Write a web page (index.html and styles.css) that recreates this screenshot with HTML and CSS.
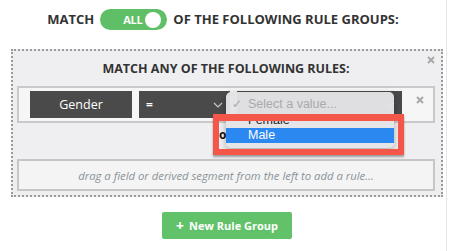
FILE: index.html
```html
<!DOCTYPE html>
<html>
<head>
<meta charset="utf-8">
<link rel="stylesheet" href="styles.css">
</head>
<body>
<div class="page">
  <div class="header">
    <span class="htext">MATCH</span>
    <span class="toggle"><span class="toggle-label">ALL</span><span class="knob"></span></span>
    <span class="htext">OF THE FOLLOWING RULE GROUPS:</span>
  </div>

  <div class="group">
    <svg class="close close-group" width="8" height="8" viewBox="0 0 8 8"><path d="M1 1L7 7M7 1L1 7" stroke="#a9a9a9" stroke-width="2"/></svg>
    <div class="group-title">MATCH ANY OF THE FOLLOWING RULES:</div>

    <div class="rule">
      <div class="field">Gender</div>
      <div class="select op">
        <span class="op-val">=</span>
        <svg class="chev" width="10" height="6" viewBox="0 0 10 6"><path d="M1 1L5 5L9 1" fill="none" stroke="#c9c9c9" stroke-width="1.2"/></svg>
      </div>
      <div class="select value">
        <svg class="chev" width="10" height="6" viewBox="0 0 10 6"><path d="M1 1L5 5L9 1" fill="none" stroke="#c9c9c9" stroke-width="1.2"/></svg>
      </div>
      <svg class="close close-rule" width="8" height="8" viewBox="0 0 8 8"><path d="M1 1L7 7M7 1L1 7" stroke="#a9a9a9" stroke-width="2"/></svg>

      <span class="under-o">o</span>
      <div class="menu">
        <div class="menu-item placeholder"><span class="check">✓</span>Select a value...</div>
        <div class="menu-item">Female</div>
        <div class="menu-item selected">Male</div>
      </div>
      <div class="highlight"></div>
    </div>

    <div class="dropzone">drag a field or derived segment from the left to add a rule…</div>
  </div>

  <div class="actions">
    <button class="btn-new"><span class="plus">+</span>New Rule Group</button>
  </div>
</div>
</body>
</html>
```

FILE: styles.css
```css
* { box-sizing: border-box; }
html, body { margin: 0; padding: 0; background: #fff; }
body { font-family: "Open Sans", "Liberation Sans", sans-serif; color: #333; }

.page {
  width: 447px;
  height: 251px;
  border-right: 1px solid #e4e4e4;
}

.header {
  height: 30px;
  padding-top: 9px;
  display: flex;
  justify-content: center;
  align-items: center;
  gap: 6px;
}
.htext {
  font-size: 13px;
  font-weight: 700;
  color: #333;
  line-height: 21px;
}
.toggle {
  width: 67px;
  height: 21px;
  border-radius: 11px;
  background: #5ebf67;
  display: flex;
  align-items: center;
  padding-left: 23px;
}
.toggle-label {
  color: #fff;
  font-size: 11px;
  font-weight: 700;
  letter-spacing: -0.3px;
}
.knob {
  width: 16px;
  height: 16px;
  border-radius: 50%;
  background: #fff;
  margin-left: 3px;
}

.group {
  position: relative;
  margin: 19px 0 0 11px;
  width: 432px;
  height: 148px;
  border: 2px dotted #9a9a9a;
  background: #efeff1;
  padding: 0 6px 0 4px;
}
.close { position: absolute; }
.close-group { right: 6px; top: 5px; }
.group-title {
  height: 35px;
  display: flex;
  align-items: center;
  justify-content: center;
  font-size: 12.5px;
  font-weight: 700;
  color: #333;
}

.rule {
  position: relative;
  height: 37px;
  border: 2px solid #c9c9c9;
  background: #f6f6f6;
  display: flex;
  gap: 7px;
  padding: 3px 0 3px 11px;
}
.field {
  width: 102px;
  background: #4a4a4a;
  color: #fff;
  font-size: 12.5px;
  display: flex;
  align-items: center;
  justify-content: center;
}
.select {
  position: relative;
  background: #4a4a4a;
  color: #fff;
  display: flex;
  align-items: center;
}
.op { width: 91px; padding-left: 7px; }
.op-val { font-size: 12px; font-weight: 700; }
.value { width: 165px; }
.chev { position: absolute; right: 7px; top: 11px; }
.close-rule { right: 9px; top: 8px; }

.under-o {
  position: absolute;
  left: 200px;
  top: 40px;
  font-size: 12px;
  font-weight: 700;
  color: #111;
  line-height: 14px;
}
.menu {
  position: absolute;
  left: 207px;
  top: 4px;
  width: 168px;
  height: 56px;
  border-radius: 5px;
  background: rgba(228, 228, 230, 0.97);
  box-shadow: 0 2px 6px rgba(0, 0, 0, 0.3);
  padding-top: 4px;
  font-family: "Liberation Sans", Arial, sans-serif;
  font-size: 12.5px;
}
.menu-item {
  height: 16px;
  line-height: 16px;
  padding-left: 22px;
  color: #222;
  position: relative;
}
.placeholder { color: #a9a9a9; }
.check {
  position: absolute;
  left: 6px;
  color: #a9a9a9;
  font-size: 12px;
}
.selected {
  background: #2b88f1;
  color: #fff;
  height: 15px;
  line-height: 15px;
}
.highlight {
  position: absolute;
  left: 194px;
  top: 26px;
  width: 191px;
  height: 41px;
  border: 6px solid #f5564a;
  border-top-width: 7px;
  box-shadow: 0 2px 2px rgba(0, 0, 0, 0.35);
}

.dropzone {
  margin-top: 36px;
  height: 32px;
  border: 2px solid #c6c6c6;
  background: #f4f4f4;
  display: flex;
  align-items: center;
  justify-content: center;
  font-size: 11.3px;
  font-style: italic;
  color: #8a9399;
}

.actions {
  margin: 15px 0 0 11px;
  width: 432px;
  display: flex;
  justify-content: center;
}
.btn-new {
  width: 130px;
  height: 27px;
  border: 0;
  border-radius: 2px;
  background: #62c26a;
  color: #fff;
  font-family: "Open Sans", "Liberation Sans", sans-serif;
  font-size: 11px;
  font-weight: 700;
  display: flex;
  align-items: center;
  justify-content: center;
  padding: 0;
}
.plus { font-size: 14px; margin-right: 5px; line-height: 1; }
```
